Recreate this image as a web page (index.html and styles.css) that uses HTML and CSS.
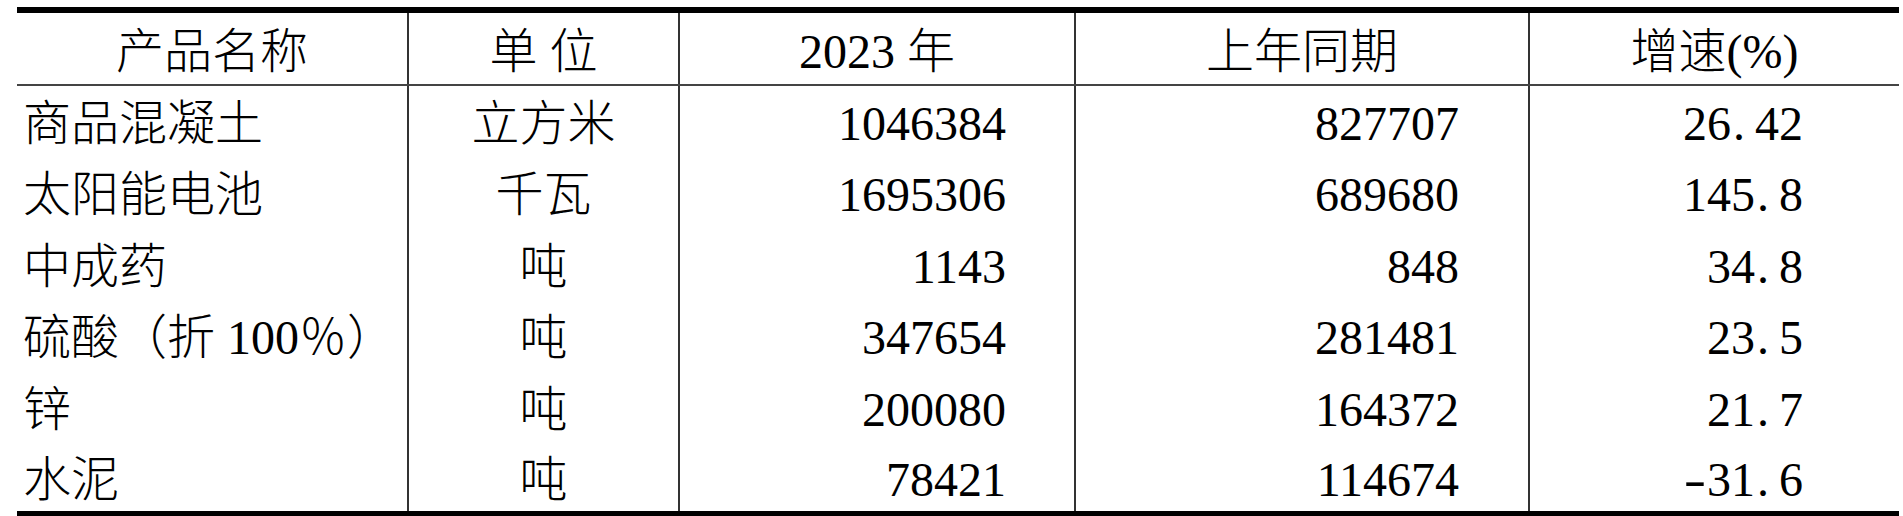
FILE: index.html
```html
<!DOCTYPE html>
<html lang="zh-CN">
<head>
<meta charset="utf-8">
<title>主要工业产品产量</title>
<link rel="stylesheet" href="styles.css">
</head>
<body>
<table class="stats">
  <colgroup>
    <col class="c-name">
    <col class="c-unit">
    <col class="c-cur">
    <col class="c-prev">
    <col class="c-rate">
  </colgroup>
  <thead>
    <tr class="head-row">
      <th>产品名称</th>
      <th>单 位</th>
      <th>2023 年</th>
      <th>上年同期</th>
      <th>增速(%)</th>
    </tr>
  </thead>
  <tbody>
    <tr class="data-row">
      <td class="name">商品混凝土</td>
      <td class="unit">立方米</td>
      <td class="cur">1046384</td>
      <td class="prev">827707</td>
      <td class="rate">26<span class="pt">.</span>42</td>
    </tr>
    <tr class="data-row">
      <td class="name">太阳能电池</td>
      <td class="unit">千瓦</td>
      <td class="cur">1695306</td>
      <td class="prev">689680</td>
      <td class="rate">145<span class="pt">.</span>8</td>
    </tr>
    <tr class="data-row">
      <td class="name">中成药</td>
      <td class="unit">吨</td>
      <td class="cur">1143</td>
      <td class="prev">848</td>
      <td class="rate">34<span class="pt">.</span>8</td>
    </tr>
    <tr class="data-row">
      <td class="name">硫酸（折 100％）</td>
      <td class="unit">吨</td>
      <td class="cur">347654</td>
      <td class="prev">281481</td>
      <td class="rate">23<span class="pt">.</span>5</td>
    </tr>
    <tr class="data-row">
      <td class="name">锌</td>
      <td class="unit">吨</td>
      <td class="cur">200080</td>
      <td class="prev">164372</td>
      <td class="rate">21<span class="pt">.</span>7</td>
    </tr>
    <tr class="data-row">
      <td class="name">水泥</td>
      <td class="unit">吨</td>
      <td class="cur">78421</td>
      <td class="prev">114674</td>
      <td class="rate"><span class="mn">-</span>31<span class="pt">.</span>6</td>
    </tr>
  </tbody>
</table>
</body>
</html>
```

FILE: styles.css
```css
html, body {
  margin: 0;
  padding: 0;
  background: #ffffff;
}

body {
  padding: 7px 0 0 17px;
  font-family: "Liberation Serif", "Noto Sans CJK SC", serif;
  font-size: 48px;
  font-weight: 300;
  color: #000000;
}

.stats {
  width: 1882px;
  table-layout: fixed;
  border-collapse: collapse;
  border-top: 6px solid #000000;
  border-bottom: 6px solid #000000;
}

.c-name { width: 391px; }
.c-unit { width: 271px; }
.c-cur  { width: 396px; }
.c-prev { width: 454px; }
.c-rate { width: 370px; }

.head-row { height: 75px; }
.data-row { height: 71.5px; }

.stats th,
.stats td {
  padding: 6px 0 0 0;
  border-left: 2px solid #333333;
  border-right: 2px solid #333333;
  white-space: nowrap;
  line-height: 1;
  font-weight: 300;
  vertical-align: middle;
}

.stats th:first-child,
.stats td:first-child {
  border-left: none;
}

.stats th:last-child,
.stats td:last-child {
  border-right: none;
}

.stats th {
  text-align: center;
  border-bottom: 2px solid #444444;
}

.name {
  text-align: left;
  padding-left: 6px !important;
}

.unit {
  text-align: center;
}

.cur {
  text-align: right;
  padding-right: 68px !important;
}

.prev {
  text-align: right;
  padding-right: 69px !important;
}

.rate {
  text-align: right;
  padding-right: 96px !important;
}

.pt {
  display: inline-block;
  width: 24px;
  text-align: left;
  padding-left: 2px;
  box-sizing: border-box;
}

.mn {
  display: inline-block;
  width: 24px;
  text-align: center;
  transform: scaleX(1.4);
}
```
